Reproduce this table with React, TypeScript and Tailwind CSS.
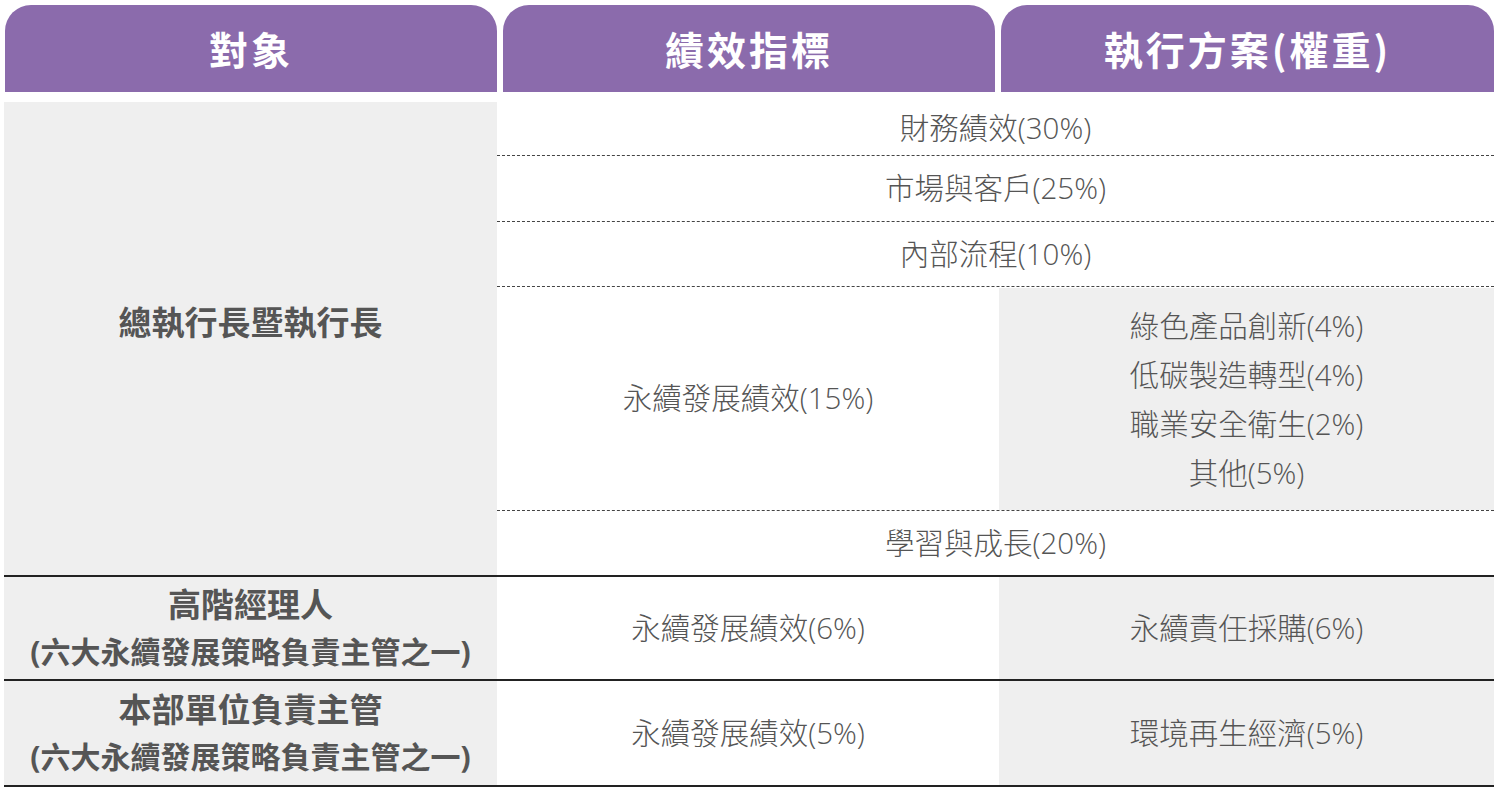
import React from 'react';

const body = "font-['Open_Sans','Noto_Sans_CJK_TC',sans-serif] font-light text-[29.5px] text-[#555555]";
const owner = "font-['Open_Sans','Noto_Sans_CJK_TC',sans-serif] font-bold text-[#555555]";

const Head = ({ label, w }: { label: string; w: string }) => (
  <div className={`${w} h-[87px] rounded-t-[26px] bg-[#8b6bac] flex items-center justify-center text-white text-[39px] font-bold tracking-[3px] font-['Noto_Sans_CJK_TC',sans-serif]`}>
    {label}
  </div>
);

const Owner = ({ title }: { title: string }) => (
  <div className={`w-[493px] bg-[#efefef] flex flex-col items-center justify-center leading-[47px] ${owner}`}>
    <div className="text-[33px]">{title}</div>
    <div className="text-[30px]">(六大永續發展策略負責主管之一)</div>
  </div>
);

export default function App() {
  return (
    <div className="w-[1500px] h-[788px] bg-white pl-[4px] pr-[6px] pt-[5px] overflow-hidden">
      {/* header tabs */}
      <div className="flex gap-[6px] pl-[1px]">
        <Head label="對象" w="w-[492px]" />
        <Head label="績效指標" w="w-[492px]" />
        <Head label="執行方案(權重)" w="w-[493px]" />
      </div>

      <div className="mt-[10px] w-[1490px]">
        {/* CEO */}
        <div className="flex h-[475px] border-b-2 border-[#222222]">
          <div className={`w-[493px] bg-[#efefef] flex justify-center pt-[197px] leading-[47px] text-[33px] ${owner}`}>
            總執行長暨執行長
          </div>
          <div className={`flex-1 flex flex-col ${body}`}>
            <div className="h-[54px] border-b border-dashed border-[#444444] flex items-center justify-center">財務績效(30%)</div>
            <div className="h-[66px] border-b border-dashed border-[#444444] flex items-center justify-center">市場與客戶(25%)</div>
            <div className="h-[65px] border-b border-dashed border-[#444444] flex items-center justify-center">內部流程(10%)</div>
            <div className="h-[224px] border-b border-dashed border-[#444444] flex">
              <div className="w-[502px] flex items-center justify-center">永續發展績效(15%)</div>
              <div className="flex-1 pt-[1px]">
                <div className="h-full bg-[#efefef] flex flex-col items-center justify-center leading-[49px]">
                  <div>綠色產品創新(4%)</div>
                  <div>低碳製造轉型(4%)</div>
                  <div>職業安全衛生(2%)</div>
                  <div>其他(5%)</div>
                </div>
              </div>
            </div>
            <div className="flex-1 flex items-center justify-center">學習與成長(20%)</div>
          </div>
        </div>

        {/* senior managers */}
        <div className="flex h-[104px] border-b-2 border-[#222222]">
          <Owner title="高階經理人" />
          <div className={`w-[502px] flex items-center justify-center ${body}`}>永續發展績效(6%)</div>
          <div className={`flex-1 bg-[#efefef] flex items-center justify-center ${body}`}>永續責任採購(6%)</div>
        </div>

        {/* unit heads */}
        <div className="flex h-[106px] border-b-2 border-[#222222]">
          <Owner title="本部單位負責主管" />
          <div className={`w-[502px] flex items-center justify-center ${body}`}>永續發展績效(5%)</div>
          <div className={`flex-1 bg-[#efefef] flex items-center justify-center ${body}`}>環境再生經濟(5%)</div>
        </div>
      </div>
    </div>
  );
}
